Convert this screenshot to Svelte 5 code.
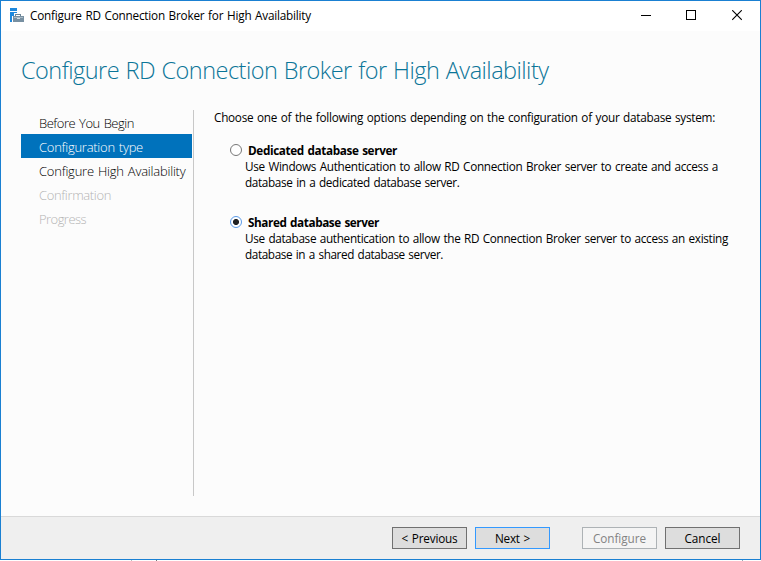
<script>
  const steps = [
    { label: 'Before You Begin', width: 95 },
    { label: 'Configuration type', width: 104, state: 'current' },
    { label: 'Configure High Availability', width: 146.5 },
    { label: 'Confirmation', width: 72, state: 'disabled' },
    { label: 'Progress', width: 47, state: 'disabled' }
  ];

  const options = [
    {
      id: 'dedicated',
      title: 'Dedicated database server',
      titleWidth: 149,
      lines: [
        { text: 'Use Windows Authentication to allow RD Connection Broker server to create and access a', width: 473 },
        { text: 'database in a dedicated database server.', width: 214.5 }
      ]
    },
    {
      id: 'shared',
      title: 'Shared database server',
      titleWidth: 131,
      lines: [
        { text: 'Use database authentication to allow the RD Connection Broker server to access an existing', width: 483 },
        { text: 'database in a shared database server.', width: 198 }
      ]
    }
  ];

  let selected = $state('shared');

  // Tracks a single line of text so that it spans the given width.
  function fit(node, width) {
    const natural = node.getBoundingClientRect().width;
    node.style.letterSpacing = `${(width - natural) / node.textContent.length}px`;
  }
</script>

<div class="window">
  <header class="titlebar">
    <svg class="app-icon" width="15" height="15" viewBox="0 0 15 15" shape-rendering="crispEdges">
      <path d="M0 0h7v3H0zM0 4h7v1H4v3H2v6H0z" fill="#1e88dc" />
      <path d="M5 6h6v2h-1V7H6v1H5z" fill="#6f8798" />
      <path d="M3 8h11v6H3z" fill="#7890a2" />
      <path d="M4 9h9v1H4z" fill="#a9bac6" />
      <path d="M7 10h3v1H7z" fill="#d3dde4" />
    </svg>
    <span class="caption"><span use:fit={281}>Configure RD Connection Broker for High Availability</span></span>
    <div class="controls">
      <svg class="minimize" width="10" height="11" viewBox="0 0 10 11" shape-rendering="crispEdges"><path d="M0 5.5h10" stroke="#000" /></svg>
      <svg width="10" height="11" viewBox="0 0 10 11" shape-rendering="crispEdges"><path d="M.5 .5h9v9h-9z" fill="none" stroke="#000" /></svg>
      <svg width="10" height="11" viewBox="0 0 10 11"><path d="M.2 .2l9.6 9.6M9.8 .2L.2 9.8" stroke="#000" stroke-width="1.1" /></svg>
    </div>
  </header>

  <h1><span use:fit={527.5}>Configure RD Connection Broker for High Availability</span></h1>

  <div class="body">
    <nav>
      {#each steps as step}
        <div class="step {step.state ?? ''}"><span use:fit={step.width}>{step.label}</span></div>
      {/each}
    </nav>

    <main>
      <p class="intro"><span use:fit={501}>Choose one of the following options depending on the configuration of your database system:</span></p>
      {#each options as option}
        <label class="option">
          <input type="radio" name="type" value={option.id} bind:group={selected} />
          <span class="text">
            <strong><span use:fit={option.titleWidth}>{option.title}</span></strong>
            {#each option.lines as line}
              <span class="line"><span use:fit={line.width}>{line.text}</span></span>
            {/each}
          </span>
        </label>
      {/each}
    </main>
  </div>

  <footer>
    <button><span use:fit={56}>&lt; Previous</span></button>
    <button class="default"><span use:fit={35}>Next &gt;</span></button>
    <button class="apart" disabled><span use:fit={53}>Configure</span></button>
    <button><span use:fit={36}>Cancel</span></button>
  </footer>
</div>
<div class="behind"><i></i><i class="dark"></i><i class="blue"></i></div>

<style>
  :global(body) {
    margin: 0;
    background: #fff;
    overflow: hidden;
  }
  .window {
    box-sizing: border-box;
    width: 761px;
    height: 560px;
    border: 1px solid #1a80d2;
    background: #fcfcfc;
    display: flex;
    flex-direction: column;
    color: #000;
    font: 11.75px/16px 'Open Sans', 'Noto Sans', sans-serif;
    word-spacing: 0.9px;
    white-space: nowrap;
  }
  .titlebar {
    height: 30px;
    background: #fff;
    display: flex;
    align-items: flex-start;
    box-sizing: border-box;
    padding: 7px 18px 0 9px;
  }
  .app-icon {
    flex: none;
  }
  .caption {
    flex: 1;
    margin: -1px 0 0 5px;
  }
  .controls {
    display: flex;
    gap: 36px;
    padding-top: 2px;
  }
  .minimize {
    margin-right: -1px;
  }
  h1 {
    margin: 19px 0 0 20px;
    height: 60px;
    font-size: 23.5px;
    line-height: 40px;
    font-weight: 300;
    color: #0b7598;
  }
  .body {
    flex: 1;
    display: flex;
  }
  nav {
    box-sizing: border-box;
    width: 173px;
    height: 386px;
    margin-left: 20px;
    border-right: 1px solid #c8c8c8;
    padding-right: 1px;
    font-size: 13px;
    font-weight: 300;
    color: #000;
  }
  .step {
    height: 24px;
    line-height: 27px;
    padding-left: 18px;
  }
  .current {
    background: #0072bc;
    color: #fff;
  }
  .disabled {
    color: #b4b4b4;
  }
  main {
    padding-left: 20px;
  }
  .intro {
    margin: -1px 0 17px;
  }
  .option {
    display: flex;
    margin: 0 0 24px 16px;
  }
  input {
    appearance: none;
    box-sizing: border-box;
    flex: none;
    width: 12px;
    height: 12px;
    margin: 2px 0 0;
    border: 1px solid #777;
    border-radius: 50%;
    background: #fff;
  }
  input:checked {
    border-color: #5b9be8;
    background: radial-gradient(circle, #222 2.7px, #fff 3.3px);
  }
  .text {
    display: flex;
    flex-direction: column;
    padding-left: 3px;
  }
  strong {
    padding-left: 3px;
    font-weight: 700;
  }
  footer {
    box-sizing: border-box;
    height: 43px;
    border-top: 1px solid #d9d9d9;
    background: #efefef;
    display: flex;
    justify-content: flex-end;
    gap: 8px;
    padding: 10px 20px 0 0;
  }
  button {
    box-sizing: border-box;
    width: 75px;
    height: 22px;
    padding: 0;
    border: 1px solid #707070;
    background: #ddd;
    color: #000;
    font: 11.75px/20px 'Open Sans', 'Noto Sans', sans-serif;
    word-spacing: 0.9px;
  }
  .default {
    border-color: #3399ff;
  }
  .apart {
    margin-left: 24px;
  }
  button:disabled {
    border-color: #adb2b5;
    background: #f4f4f4;
    color: #838383;
  }
  .behind {
    display: flex;
    height: 1px;
    padding-left: 131px;
  }
  .behind i {
    width: 1px;
    background: #bbb;
  }
  .behind .dark {
    margin-left: 24px;
    background: #777;
  }
  .behind .blue {
    margin-left: 585px;
    background: #9aa7b5;
  }
</style>
